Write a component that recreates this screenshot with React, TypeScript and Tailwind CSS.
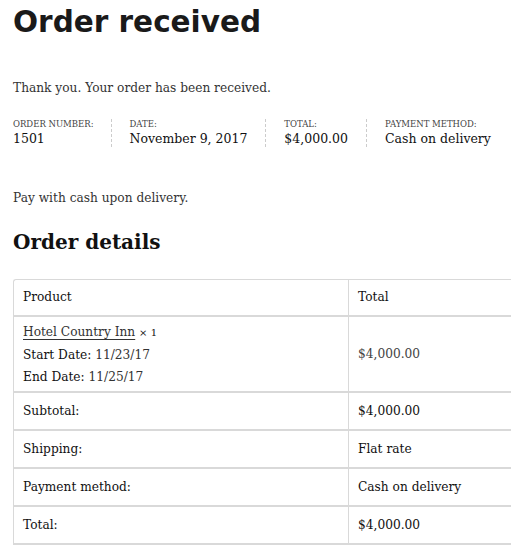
const serif = "font-['DejaVu_Serif',serif]";

const meta = [
  { label: "Order number:", value: "1501" },
  { label: "Date:", value: "November 9, 2017" },
  { label: "Total:", value: "$4,000.00" },
  { label: "Payment method:", value: "Cash on delivery" },
];

const totals = [
  { label: "Subtotal:", value: "$4,000.00" },
  { label: "Shipping:", value: "Flat rate" },
  { label: "Payment method:", value: "Cash on delivery" },
  { label: "Total:", value: "$4,000.00" },
];

export default function App() {
  return (
    <div className={`min-h-[558px] overflow-hidden bg-white pl-[13px] text-[#1a1a1a] ${serif}`}>
      <h1 className="pt-[2px] font-['DejaVu_Sans',sans-serif] text-[29.5px] font-bold leading-[40px] text-[#1a1a1a]">
        Order received
      </h1>

      <p className="mt-[36px] text-[12.2px] leading-[20px] text-[#333]">
        Thank you. Your order has been received.
      </p>

      <ul className="mt-[21px] flex whitespace-nowrap">
        {meta.map((m, i) => (
          <li
            key={m.label}
            className={i === 0 ? "pr-[17px]" : "border-l border-dashed border-[#ccc] px-[18px]"}
          >
            <div className="text-[8.5px] uppercase leading-[11px] text-[#444]">{m.label}</div>
            <div className="text-[12.5px] leading-[17px] text-[#111]">{m.value}</div>
          </li>
        ))}
      </ul>

      <p className="mt-[41px] text-[12.2px] leading-[20px] text-[#333]">Pay with cash upon delivery.</p>

      <h2 className="mt-[20px] text-[20px] font-bold leading-[28px] text-[#111]">Order details</h2>

      <table className="mt-[23px] w-[520px] border-separate border-spacing-0 rounded-tl-[3px] border-l border-t border-[#d9d9d9] text-[12.2px] text-[#111]">
        <thead>
          <tr>
            <th className="h-[37px] w-[335px] border-b-2 border-r border-[#d9d9d9] px-[9px] text-left font-normal">Product</th>
            <th className="h-[37px] border-b-2 border-[#d9d9d9] px-[9px] text-left font-normal">Total</th>
          </tr>
        </thead>
        <tbody>
          <tr>
            <td className="h-[76px] border-b-2 border-r border-[#d9d9d9] px-[9px] py-[3px] leading-[22px]">
              <div>
                <span className="underline decoration-1 underline-offset-[3px] text-[#333]">Hotel Country Inn</span>{" "}
                <span className="text-[10px]">× 1</span>
              </div>
              <div>Start Date: <span className="text-[#333]">11/23/17</span></div>
              <div>End Date: <span className="text-[#333]">11/25/17</span></div>
            </td>
            <td className="border-b-2 border-[#d9d9d9] px-[9px] text-[#444]">$4,000.00</td>
          </tr>
          {totals.map((t) => (
            <tr key={t.label}>
              <th className="h-[38px] border-b-2 border-r border-[#d9d9d9] px-[9px] text-left font-normal">
                {t.label}
              </th>
              <td className="h-[38px] border-b-2 border-[#d9d9d9] px-[9px]">{t.value}</td>
            </tr>
          ))}
        </tbody>
      </table>
    </div>
  );
}
